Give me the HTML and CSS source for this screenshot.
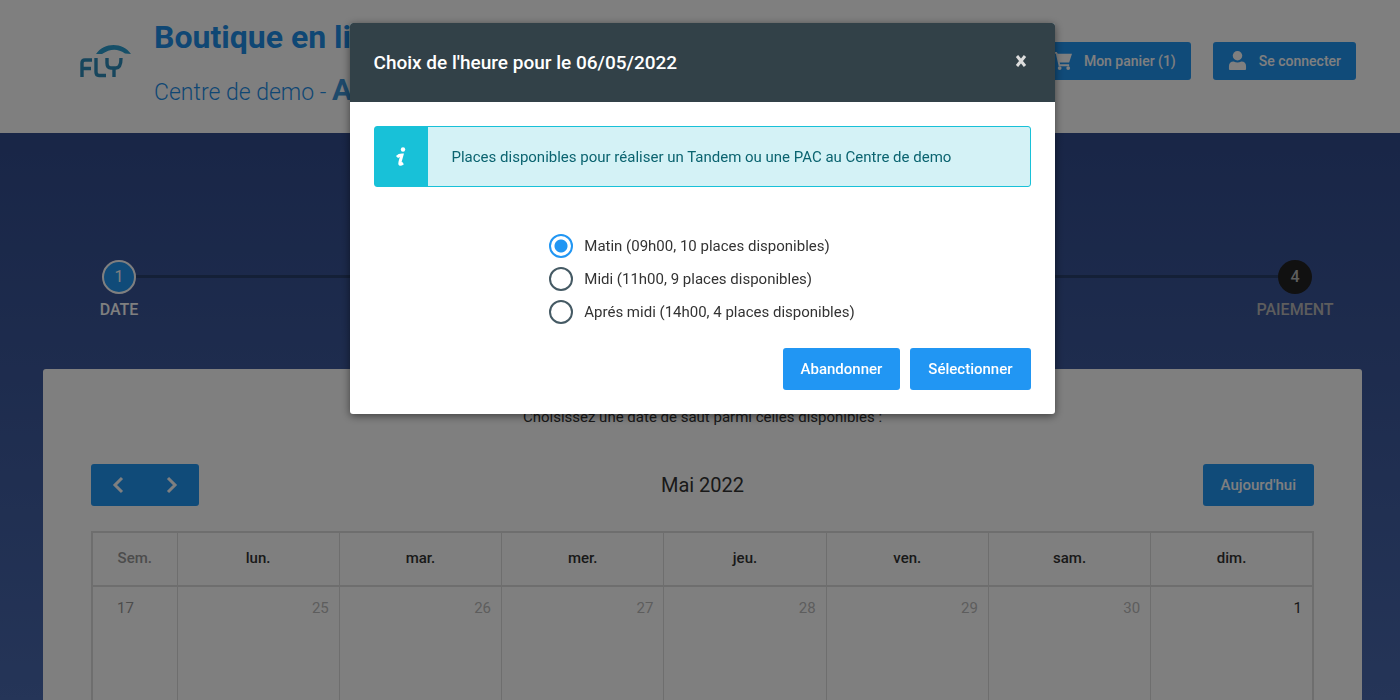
FILE: index.html
```html
<!DOCTYPE html>
<html lang="fr">
<head>
  <meta charset="UTF-8" />
  <meta name="viewport" content="width=device-width, initial-scale=1.0" />
  <title>Boutique en ligne</title>
  <link rel="stylesheet" href="styles.css">
</head>
<body>
  <!-- En-tête -->
  <header class="header">
    <svg class="logo" viewBox="0 0 52 34" role="img" aria-label="Fly">
      <path d="M16 10C24-2 43-2 51 10L45 9.500C37 4 30 5 22 10Z" fill="#2d9fd0"/>
      <g fill="none" stroke="#2f8cba" stroke-width="3.400" stroke-linejoin="round">
        <path d="M2 33V19Q2 16 5 16H12M2 24.500H11"/>
        <path d="M16 14V28Q16 31.500 19 31.500H26"/>
        <path d="M27 14V19Q27 24 31 24H36Q41 24 41 14M34 24V33"/>
      </g>
    </svg>
    <div class="brand">
      <h1>Boutique en ligne</h1>
      <p>Centre de demo - <b>A</b></p>
    </div>
    <nav class="header-actions">
      <button class="btn btn-small" type="button">
        <svg class="icon" viewBox="0 0 20 20" aria-hidden="true">
          <path d="M0 1H4L5 3H20L17 12H7L7.500 14H17V16H6L3 3H0Z"/>
          <circle cx="7" cy="18" r="2"/>
          <circle cx="16" cy="18" r="2"/>
        </svg>
        Mon panier (1)
      </button>
      <button class="btn btn-small" type="button">
        <svg class="icon" viewBox="0 0 20 20" aria-hidden="true">
          <circle cx="10" cy="5" r="5"/>
          <path d="M1 19V16Q1 11 6 11Q10 13 14 11Q19 11 19 16V19Q19 20 18 20H2Q1 20 1 19Z"/>
        </svg>
        Se connecter
      </button>
    </nav>
  </header>

  <!-- Etapes -->
  <ol class="steps">
    <li class="step active"><span class="step-number">1</span>DATE</li>
    <li class="step-line" aria-hidden="true"></li>
    <li class="step"><span class="step-number">4</span>PAIEMENT</li>
  </ol>

  <!-- Calendrier -->
  <main class="card">
    <p class="card-intro">Choisissez une date de saut parmi celles disponibles :</p>
    <div class="toolbar">
      <div class="btn-group">
        <button class="btn btn-nav" type="button" aria-label="Mois précédent">
          <svg class="chevron" viewBox="0 0 12 18" aria-hidden="true"><path d="M10 2L3 9L10 16"/></svg>
        </button>
        <button class="btn btn-nav" type="button" aria-label="Mois suivant">
          <svg class="chevron" viewBox="0 0 12 18" aria-hidden="true"><path d="M2 2L9 9L2 16"/></svg>
        </button>
      </div>
      <h2>Mai 2022</h2>
      <button class="btn btn-today" type="button">Aujourd'hui</button>
    </div>
    <table class="calendar">
      <thead>
        <tr>
          <th class="week">Sem.</th>
          <th>lun.</th>
          <th>mar.</th>
          <th>mer.</th>
          <th>jeu.</th>
          <th>ven.</th>
          <th>sam.</th>
          <th>dim.</th>
        </tr>
      </thead>
      <tbody>
        <tr>
          <td class="week">17</td>
          <td class="other">25</td>
          <td class="other">26</td>
          <td class="other">27</td>
          <td class="other">28</td>
          <td class="other">29</td>
          <td class="other">30</td>
          <td>1</td>
        </tr>
      </tbody>
    </table>
  </main>

  <!-- Choix de l'heure -->
  <div class="overlay">
    <form class="modal" role="dialog" aria-labelledby="modalTitle">
      <div class="modal-header">
        <h2 id="modalTitle">Choix de l'heure pour le 06/05/2022</h2>
        <button class="close" type="button" aria-label="Fermer">
          <svg viewBox="0 0 12 12" aria-hidden="true"><path d="M2 1L10 11M10 1L2 11"/></svg>
        </button>
      </div>
      <div class="modal-body">
        <div class="alert">
          <span class="alert-icon">
            <svg viewBox="0 0 12 20" aria-hidden="true">
              <circle cx="8" cy="2.500" r="2.200"/>
              <path d="M2 10Q4 8 7 8L5 15Q4 19 8 16"/>
            </svg>
          </span>
          <p>Places disponibles pour réaliser un Tandem ou une PAC au Centre de demo</p>
        </div>
        <div class="choices">
          <label><input type="radio" name="heure" checked />Matin (09h00, 10 places disponibles)</label>
          <label><input type="radio" name="heure" />Midi (11h00, 9 places disponibles)</label>
          <label><input type="radio" name="heure" />Aprés midi (14h00, 4 places disponibles)</label>
        </div>
        <div class="modal-actions">
          <button class="btn" type="button">Abandonner</button>
          <button class="btn" type="submit">Sélectionner</button>
        </div>
      </div>
    </form>
  </div>
</body>
</html>
```

FILE: styles.css
```css
* {
  box-sizing: border-box;
}

body {
  margin: 0;
  height: 100vh;
  overflow: hidden;
  background: linear-gradient(#324c8e 133px, #4a6ab0 100%);
  font-family: Roboto, sans-serif;
  font-size: 15px;
  line-height: 24px;
  color: #333;
}

h1, h2, p, ol {
  margin: 0;
  padding: 0;
}

.header {
  display: flex;
  align-items: center;
  height: 133px;
  padding: 0 44px 12px 80px;
  background: #fff;
}

.logo {
  width: 52px;
  height: 34px;
}

.brand {
  margin-left: 22px;
  padding-top: 16px;
  color: #1f8fe8;
}

.brand h1 {
  font-size: 32px;
  line-height: 46px;
  font-weight: 700;
}

.brand p {
  font-size: 23px;
  line-height: 60px;
  font-weight: 300;
}

.brand b {
  font-size: 30px;
  font-weight: 700;
  color: #3d94d6;
}

.header-actions {
  display: flex;
  gap: 22px;
  margin-left: auto;
}

.btn {
  display: flex;
  align-items: center;
  justify-content: center;
  height: 42px;
  padding: 0 18px;
  border: none;
  border-radius: 3px;
  background: #2196f3;
  color: #fff;
  font-family: inherit;
  font-size: 15px;
  font-weight: 500;
  cursor: pointer;
}

.btn-small {
  height: 38px;
  padding: 0 15px;
  gap: 12px;
  font-size: 14px;
}

.icon {
  width: 19px;
  height: 19px;
  fill: #fff;
}

.steps {
  display: flex;
  align-items: flex-start;
  height: 236px;
  padding: 127px 55px 0 69px;
  list-style: none;
  color: #fff;
}

.step {
  display: flex;
  flex-direction: column;
  align-items: center;
  gap: 4px;
  width: 100px;
  font-size: 16px;
  font-weight: 500;
  color: #bbb;
}

.step.active {
  color: #fff;
}

.step-number {
  width: 34px;
  height: 34px;
  border-radius: 50%;
  background: #222;
  line-height: 34px;
  text-align: center;
}

.active .step-number {
  border: 2px solid #fff;
  background: #2196f3;
  font-weight: 400;
  line-height: 30px;
}

.step-line {
  flex: 1;
  height: 3px;
  margin: 15px -33px 0;
  background: #29406f;
}

.card {
  margin: 0 38px 0 43px;
  padding: 36px 48px 48px;
  border-radius: 3px;
  background: #fff;
}

.card-intro {
  text-align: center;
}

.toolbar {
  display: grid;
  grid-template-columns: 1fr auto 1fr;
  align-items: center;
  margin: 35px 0 25px;
}

.toolbar h2 {
  font-size: 20px;
  font-weight: 400;
}

.btn-group {
  display: flex;
}

.btn-nav {
  width: 54px;
}

.btn-nav:first-child {
  border-radius: 3px 0 0 3px;
}

.btn-nav:last-child {
  border-radius: 0 3px 3px 0;
}

.chevron {
  width: 12px;
  height: 18px;
  fill: none;
  stroke: #fff;
  stroke-width: 3;
}

.btn-today {
  justify-self: end;
}

.calendar {
  width: 100%;
  table-layout: fixed;
  border-collapse: collapse;
  border: 2px solid #ddd;
}

.calendar th,
.calendar td {
  border: 1px solid #ddd;
}

.calendar th {
  height: 54px;
  padding: 0 0 2px;
  border-bottom-width: 2px;
  font-weight: 500;
}

.calendar td {
  height: 160px;
  padding: 9px 10px;
  text-align: right;
  vertical-align: top;
  color: #333;
}

.calendar .week {
  width: 85px;
  color: #999;
}

.calendar td.week {
  padding-left: 24px;
  text-align: left;
}

.calendar td.other {
  color: #bbb;
}

.overlay {
  position: fixed;
  inset: 0;
  padding: 23px 0 0 4px;
  background: rgba(0, 0, 0, 0.5);
}

.modal {
  max-width: 705px;
  margin: 0 auto;
  border-radius: 3px;
  background: #fff;
  box-shadow: 0 2px 8px rgba(0, 0, 0, 0.5);
}

.modal-header {
  display: flex;
  align-items: center;
  justify-content: space-between;
  height: 79px;
  padding: 0 24px;
  border-radius: 3px 3px 0 0;
  background: #324148;
  color: #fff;
}

.modal-header h2 {
  font-size: 19px;
  font-weight: 500;
}

.close {
  width: 20px;
  height: 24px;
  padding: 0 4px 4px;
  border: none;
  background: none;
  cursor: pointer;
}

.close svg {
  display: block;
  width: 12px;
  height: 12px;
  stroke: #ddd;
  stroke-width: 3;
}

.modal-body {
  padding: 24px;
}

.alert {
  display: flex;
  min-height: 61px;
  border: 1px solid #18c1d8;
  border-radius: 3px;
  background: #d4f2f6;
  color: #0b6470;
}

.alert-icon {
  display: flex;
  align-items: center;
  justify-content: center;
  width: 53px;
  background: #18c1d8;
}

.alert-icon svg {
  width: 12px;
  height: 20px;
  fill: #fff;
}

.alert-icon path {
  fill: none;
  stroke: #fff;
  stroke-width: 3;
}

.alert p {
  align-self: center;
  padding: 0 24px;
}

.choices {
  display: flex;
  flex-direction: column;
  gap: 9px;
  width: fit-content;
  margin: 47px auto 24px;
}

.choices label {
  display: flex;
  align-items: center;
  gap: 11px;
  cursor: pointer;
}

.choices input {
  appearance: none;
  width: 24px;
  height: 24px;
  margin: 0;
  border: 2px solid #455a64;
  border-radius: 50%;
}

.choices input:checked {
  border-color: #2196f3;
  background: radial-gradient(circle, #2196f3 6px, #fff 7px);
}

.modal-actions {
  display: flex;
  justify-content: flex-end;
  gap: 10px;
}
```
